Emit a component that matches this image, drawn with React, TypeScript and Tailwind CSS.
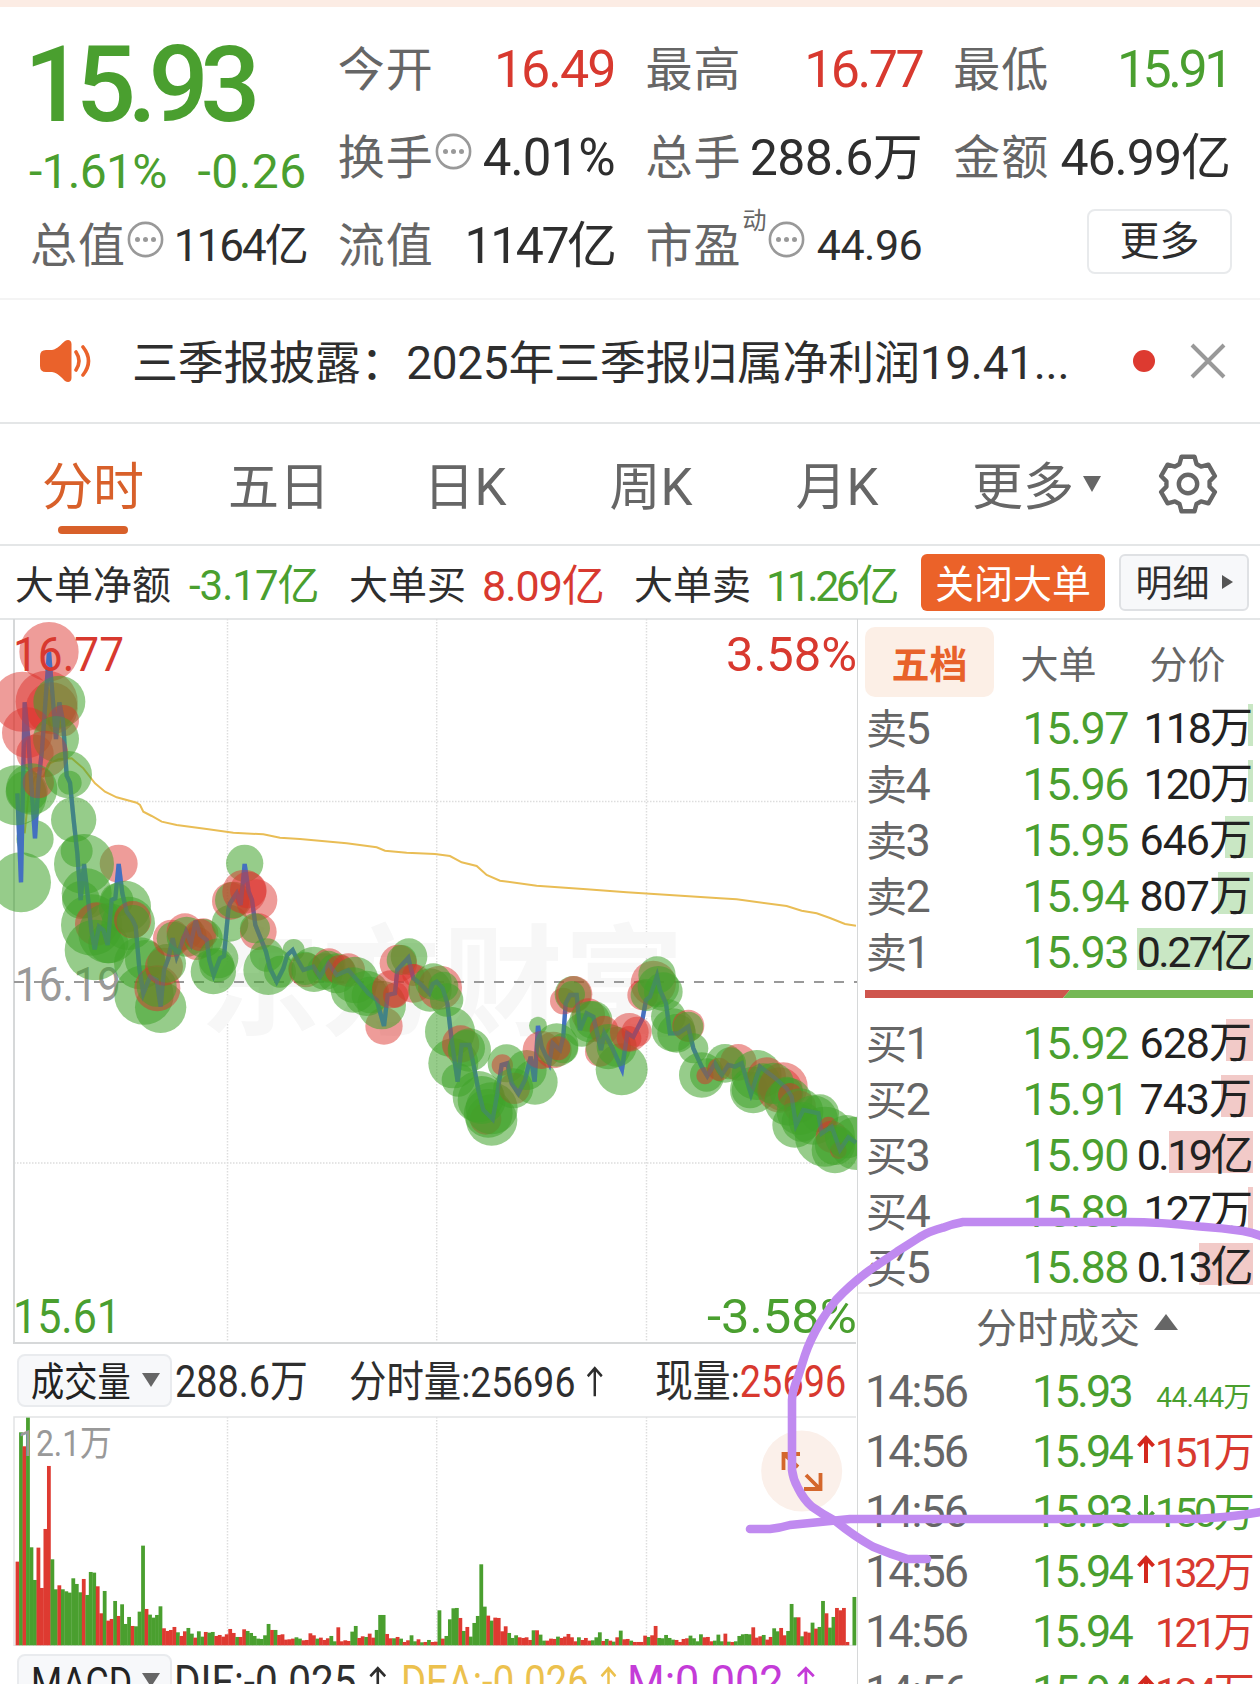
import type { ReactNode } from "react";

const GREEN = "#4a9f2f";
const RED = "#d8392f";

const Dots = () => (
  <svg width="37" height="37" viewBox="0 0 37 37" className="shrink-0">
    <circle cx="18.5" cy="18.5" r="16.6" fill="none" stroke="#999" strokeWidth="2.6" />
    <circle cx="10.5" cy="18.5" r="2.5" fill="#999" />
    <circle cx="18.5" cy="18.5" r="2.5" fill="#999" />
    <circle cx="26.5" cy="18.5" r="2.5" fill="#999" />
  </svg>
);

type StatProps = {
  label: string;
  value: string;
  valueClass: string;
  dots?: boolean;
  sup?: string;
};

const Stat = ({ label, value, valueClass, dots, sup }: StatProps) => (
  <div className="flex items-center whitespace-nowrap h-[88px]">
    <span className="text-[47px] tracking-[1px] text-[#666]">{label}</span>
    {sup && <span className="text-[24px] text-[#666] self-start mt-[5px] ml-[1px]">{sup}</span>}
    {dots && (
      <span className="ml-[1px] -mt-[13px]">
        <Dots />
      </span>
    )}
    <span className={"ml-auto " + valueClass}>{value}</span>
  </div>
);

const Header = () => (
  <div className="grid grid-cols-4 grid-rows-[88px_88px_88px] gap-x-[31px] px-[30px] pt-[19px] h-[293px] border-b-2 border-[#f4f4f4]">
    <div className="row-span-2 whitespace-nowrap text-[#4a9f2f]">
      <div className="-ml-[6px] -mt-[1px] text-[106px] font-medium leading-[120px] tracking-[-8.500px]">15.93</div>
      <div className="flex justify-between text-[48px] leading-[54px]">
        <span className="-ml-[1px] tracking-[-.7px]">-1.61%</span>
        <span className="tracking-[.5px]">-0.26</span>
      </div>
    </div>
    <Stat label="今开" value="16.49" valueClass="text-[52px] tracking-[-2px] text-[#d8392f]" />
    <Stat label="最高" value="16.77" valueClass="text-[52px] tracking-[-2.500px] text-[#d8392f]" />
    <Stat label="最低" value="15.91" valueClass="text-[52px] tracking-[-3.500px] text-[#4a9f2f]" />
    <Stat label="换手" value="4.01%" valueClass="text-[51px] tracking-[-1px] text-[#2e2e2e]" dots />
    <Stat label="总手" value="288.6万" valueClass="text-[50px] tracking-[-.5px] text-[#2e2e2e]" />
    <Stat label="金额" value="46.99亿" valueClass="text-[50px] tracking-[-1px] text-[#2e2e2e]" />
    <Stat label="总值" value="1164亿" valueClass="text-[44px] tracking-[-2px] text-[#2e2e2e]" dots />
    <Stat label="流值" value="1147亿" valueClass="text-[50px] tracking-[-2.500px] text-[#2e2e2e]" />
    <Stat label="市盈" value="44.96" valueClass="text-[43px] tracking-[-.5px] text-[#2e2e2e]" sup="动" dots />
    <div className="flex items-center justify-end h-[88px]">
      <div className="flex items-center justify-center w-[145px] h-[65px] -mr-[2px] -mt-[9px] border-2 border-[#e8eaec] rounded-lg text-[40px] text-[#2e2e2e]">
        更多
      </div>
    </div>
  </div>
);

const News = () => (
  <div className="flex items-center h-[124px] border-b-2 border-[#e4e6e7] pl-[40px]">
    <svg width="52" height="44" viewBox="0 0 52 44" className="shrink-0">
      <path
        d="M6 11H12C18 10 21 5 25 2C28 0 31.500 1 31.500 5V39C31.500 43 28 44 25 42C21 38 18 34 12 33H6Q0 33 0 27V17Q0 11 6 11Z"
        fill="#ea622b"
      />
      <path d="M36 13Q42 22 36 31M43 8Q54 22 43 36" fill="none" stroke="#ea622b" strokeWidth="3.600" strokeLinecap="round" />
    </svg>
    <div className="ml-[40px] pt-[6px] w-[940px] whitespace-nowrap text-[46px] tracking-[-.3px] text-[#2e2e2e]">
      三季报披露：2025年三季报归属净利润19.41...
    </div>
    <div className="ml-[61px] size-[22px] rounded-full bg-[#dd3a30]" />
    <svg width="36" height="36" viewBox="0 0 36 36" className="ml-[35px]">
      <path d="M2 2L34 34M34 2L2 34" stroke="#999" strokeWidth="4" />
    </svg>
  </div>
);

const gearPoints = [0, 60, 120, 180, 240, 300]
  .flatMap((deg) => {
    const a = (deg * Math.PI) / 180;
    return [
      [-8.5, -20],
      [-6.5, -27.3],
      [6.5, -27.3],
      [8.5, -20],
    ].map(([x, y]) => `${x * Math.cos(a) - y * Math.sin(a)},${x * Math.sin(a) + y * Math.cos(a)}`);
  })
  .join(" ");

const Tabs = () => (
  <div className="flex items-center h-[122px] border-b-2 border-[#e4e6e7] text-[51px] text-[#666]">
    <div className="relative pt-[7px] w-[186px] text-center text-[#d8602a]">
      分时
      <div className="absolute left-[58px] -bottom-[16px] w-[70px] h-[8px] rounded-full bg-[#d8602a]" />
    </div>
    <div className="pt-[7px] w-[186px] text-center">五日</div>
    <div className="pt-[7px] w-[186px] text-center">日K</div>
    <div className="pt-[7px] w-[186px] text-center">周K</div>
    <div className="pt-[7px] w-[186px] text-center">月K</div>
    <div className="flex items-center ml-[42px] w-[185px]">
      <span className="pt-[7px]">更多</span>
      <svg width="18" height="16" viewBox="0 0 18 16" className="ml-[9px]">
        <path d="M0 0H18L9 16Z" fill="#666" />
      </svg>
    </div>
    <svg width="62" height="62" viewBox="-31 -31 62 62">
      <polygon points={gearPoints} fill="none" stroke="#666" strokeWidth="4.400" strokeLinejoin="round" />
      <circle r="9.200" fill="none" stroke="#666" strokeWidth="4.400" />
    </svg>
  </div>
);

const BigOrders = () => (
  <div className="flex items-center h-[74px] border-b-2 border-[#e4e6e7] whitespace-nowrap text-[39px] text-[#2e2e2e]">
    <div className="flex shrink-0 items-center pt-[9px] pl-[15px] w-[921px]">
      <div className="w-[174px]">大单净额</div>
      <div className="w-[160px] text-[42px] tracking-[-1px] text-[#4a9f2f]">-3.17亿</div>
      <div className="w-[133px]">大单买</div>
      <div className="w-[152px] text-[43px] tracking-[-1px] text-[#d8392f]">8.09亿</div>
      <div className="w-[132px]">大单卖</div>
      <div className="text-[43px] tracking-[-3.500px] text-[#4a9f2f]">11.26亿</div>
    </div>
    <div className="flex items-center justify-center pt-[6px] w-[184px] h-[57px] rounded-md bg-[#eb6229] text-white">关闭大单</div>
    <div className="flex items-center justify-center ml-[14px] w-[130px] h-[57px] rounded-md border-2 border-[#dfe1e4] bg-[#f7f8fa] text-[37px]">
      <span className="pt-[7px]">明细</span>
      <svg width="11" height="14" viewBox="0 0 11 14" className="ml-[12px]">
        <path d="M0 0L11 7L0 14Z" fill="#555" />
      </svg>
    </div>
  </div>
);

// bubbles: colour, x, y, radius in third-pixel units from the chart's top left
const peaks = `r147,125,89 g63,817,90 g734,760,56 r356,761,57 g482,1192,77 g1227,1040,55 r1152,1248,56
g105,687,56 g1475,1530,77 g1605,1416,68 g1614,1247,27 g1865,1378,78`;

const bubbles = `r67,275,90 r140,275,93 r155,295,78 g178,275,78 r82,368,76 r105,430,56 r190,332,47 g168,387,69
r135,432,70 g50,556,90 g95,537,77 g80,545,63 r115,518,47 g205,494,71 g209,518,36 g221,629,68 g252,762,90
g230,723,48 g260,850,75 g243,870,57 g275,945,92 r290,942,65 g285,1020,91 g325,970,90 g325,1000,60
g350,870,50 g375,890,78 g385,940,80 r398,929,56 g400,935,50 g420,1060,78 g435,1050,60 g432,1155,89
r472,1135,69 g470,1130,60 r492,1070,57 g500,1060,58 r515,985,56 g520,985,50 r555,965,55 g560,980,60
r590,1000,50 r610,970,45 g610,985,58 r600,975,48 g640,1085,68 g655,1045,60 g650,1065,52 g690,940,55
r692,873,56 g700,870,55 r733,845,66 r770,870,62 r745,840,55 r775,965,55 g765,955,45 g805,1080,75
g800,1035,50 g840,1085,48 g881,1020,33 r918,1080,52 g915,1075,50 g942,1078,68 g975,1085,55 r987,1065,50
g985,1070,48 g1010,1090,60 r1045,1080,50 r1020,1080,45 g1065,1110,70 g1060,1140,68 g1100,1150,68
g1110,1155,55 g1145,1185,73 r1173,1138,57 r1187,1155,38 r1195,1060,56 g1205,1050,45 r1240,1120,58
r1240,1095,33 g1290,1140,65 r1320,1133,66 g1300,1115,55 g1330,1130,45 g1340,1170,50 g1350,1265,75
g1360,1360,75 r1382,1302,56 g1408,1320,65 g1400,1315,55 g1375,1410,50 r1457,1527,47 g1435,1460,77
g1445,1470,72 g1465,1510,73 g1475,1495,78 g1520,1360,57 r1507,1365,32 r1543,1435,47 g1540,1435,60
g1580,1380,60 r1625,1320,57 r1660,1320,55 g1670,1305,65 g1690,1315,45 r1675,1315,36 r1690,1173,40
g1719,1153,55 r1722,1153,55 g1715,1153,40 r1765,1215,50 g1770,1235,62 g1780,1230,57 g1745,1260,50
r1812,1260,43 r1800,1325,45 g1825,1310,68 g1850,1310,60 r1888,1267,58 r1910,1265,45 r1887,1285,37
r1960,1120,68 r1928,1155,46 g1940,1155,48 g1971,1095,56 g1990,1145,58 g1975,1130,62 g2005,1220,52
g2020,1260,65 g2030,1270,58 r2065,1247,48 g2065,1250,45 g2080,1315,45 g2105,1395,68 g2120,1395,50
r2115,1397,26 g2175,1360,58 r2157,1378,35 r2215,1357,55 g2190,1360,48 g2270,1395,75 g2260,1440,70
g2250,1440,55 r2300,1400,58 g2290,1410,50 r2350,1430,73 r2340,1440,68 g2320,1420,62 g2365,1475,72
g2360,1450,50 r2370,1455,36 r2400,1490,48 g2385,1545,68 g2405,1535,60 g2400,1505,70 g2440,1530,74
g2460,1510,57 g2475,1580,90 r2485,1545,25 r2495,1580,48 g2505,1620,70 g2505,1605,60 r2515,1622,25
g2540,1580,65 g2570,1600,80`;

const priceLine = `52,550 63,817 74,277 84,375 105,685 116,510 126,420 147,125 168,387 178,277 189,333 200,497
210,518 221,630 232,730 242,870 252,762 263,855 274,960 284,1018 297,950 310,960 323,1005 335,870 346,865
356,762 367,850 380,905 398,930 407,950 418,1075 430,1150 450,1100 470,1110 482,1190 492,1080 505,1045
518,985 530,1040 545,1000 558,965 573,1000 587,932 600,975 620,990 628,1050 641,1095 660,1045 672,1038
685,900 690,880 710,850 722,885 734,762 746,845 756,870 766,945 798,1025 810,1075 830,1115 850,1075
862,1035 878,1020 890,1045 910,1080 940,1070 960,1100 985,1060 1010,1095 1045,1080 1080,1120 1105,1150
1130,1170 1152,1248 1163,1155 1185,1150 1192,1080 1225,1043 1240,1105 1260,1120 1288,1150 1298,1122
1310,1115 1328,1135 1342,1180 1355,1290 1365,1360 1373,1415 1385,1305 1408,1305 1420,1360 1435,1440
1450,1500 1478,1528 1492,1450 1505,1365 1522,1360 1535,1420 1555,1450 1575,1410 1592,1340 1604,1415
1614,1248 1625,1310 1648,1360 1658,1300 1680,1320 1690,1280 1697,1180 1710,1155 1730,1155 1740,1260
1760,1210 1780,1220 1803,1320 1813,1270 1835,1310 1866,1378 1882,1270 1900,1280 1928,1225 1938,1170
1950,1160 1971,1098 1980,1140 1998,1180 2010,1270 2035,1270 2065,1250 2080,1315 2105,1370 2122,1398
2145,1360 2165,1395 2185,1365 2205,1370 2225,1360 2253,1452 2280,1370 2320,1400 2360,1435 2375,1460
2388,1545 2410,1500 2455,1510 2465,1570 2495,1550 2520,1620 2545,1582 2568,1598`;

const avgLine = `74,670 85,560 105,500 130,500 150,460 175,448 215,445 250,475 285,520 315,545 350,562 410,578
420,585 430,605 455,618 485,635 530,645 620,657 700,668 790,673 840,683 900,687 1040,700 1130,712
1155,722 1220,728 1305,732 1350,738 1385,757 1430,768 1460,795 1500,812 1610,827 1760,838 1880,847
2020,856 2160,865 2210,868 2360,888 2405,902 2450,910 2490,924 2535,942 2568,947`;

const Bubbles = ({ data }: { data: string }) => (
  <>
    {data.split(/\s+/).map((item, i) => {
      const [x, y, r] = item.slice(1).split(",");
      return (
        <circle key={i} cx={x} cy={y} r={r} fill={item[0] === "r" ? "#dc302a" : "#3fa32a"} fillOpacity={item[0] === "r" ? 0.48 : 0.55} />
      );
    })}
  </>
);

const PriceChart = () => (
  <svg width="857" height="725" viewBox="0 619 857 725" className="block">
    <g stroke="#ddd" strokeWidth="1.500" strokeDasharray="1.500 1.500">
      <path d="M227.500 619V1343M436.700 619V1343M646.500 619V1343M14 801.500H857M14 1163H857" />
    </g>
    <path d="M14 619V1343H856" fill="none" stroke="#d6d8d9" strokeWidth="2" />
    <text x="200" y="1026" textLength="484" fontSize="120" fontWeight="700" fill="#f7f7f7">东方财富</text>
    <path d="M14 982H857" stroke="#999" strokeWidth="2" strokeDasharray="10 10" />
    <text x="15" y="1001" textLength="106" lengthAdjust="spacingAndGlyphs" fontSize="48" fill="#999">16.19</text>
    <g transform="translate(0 610) scale(.33333)">
      <polyline points={avgLine} fill="none" stroke="#e9bd55" strokeWidth="6" />
      <Bubbles data={peaks} />
      <polyline points={priceLine} fill="none" stroke="#4470c0" strokeWidth="13" />
      <Bubbles data={bubbles} />
      <polyline points={priceLine} fill="none" stroke="#4470c0" strokeOpacity=".3" strokeWidth="13" />
    </g>
    <text x="13" y="671" textLength="111" lengthAdjust="spacingAndGlyphs" fontSize="48" fill={RED}>16.77</text>
    <text x="726" y="671" textLength="131" lengthAdjust="spacingAndGlyphs" fontSize="48" fill={RED}>3.58%</text>
    <text x="13" y="1333" textLength="108" lengthAdjust="spacingAndGlyphs" fontSize="48" fill={GREEN}>15.61</text>
    <text x="707" y="1333" textLength="150" lengthAdjust="spacingAndGlyphs" fontSize="48" fill={GREEN}>-3.58%</text>
  </svg>
);

// one bar per minute: colour and height
const volume = `r251 g639 r597 g683 g294 g196 r293 r172 r349 r538 g258 g168 r180 g168 g162 g158 g201 g184 g159 r199
g151 g220 g218 r177 r96 g163 r74 r79 g133 r88 g123 g64 g85 r58 g57 g101 g299 r109 g92 g83 g91 g117 r51 r43
r46 r55 g39 r28 r42 g52 g35 r23 g42 g26 r40 g38 g40 r28 r31 r26 r33 r49 r37 g25 r25 r48 g43 g37 g28 g20 g19
g30 g64 r46 g46 r31 r33 r17 r18 r20 g24 g20 r15 r16 r36 r30 g20 r23 r16 r21 g28 g12 r54 r12 r15 r13 g41 g58
r22 r27 g25 r35 r23 g46 g91 g91 r34 r21 g21 r25 g20 r10 r15 g30 g12 r18 g9 r10 g16 r10 r11 g105 r20 g28 g78
g111 g112 r82 g43 r55 g26 g67 g88 g243 g116 r89 g74 r83 r82 r42 r57 g37 g22 g30 r24 r22 r24 r16 g45 r45 g32
g14 r14 r20 r19 g26 r22 r26 r34 r24 r12 g24 r16 r22 r14 g15 g24 g39 r13 g19 r14 g11 r24 g44 r18 r19 g14 r10
r10 r10 r29 g25 r30 r58 g22 g21 g31 g22 g17 r16 r10 r19 r21 g29 g21 g12 g33 r24 r25 r12 g14 g32 g12 r35 g11
r10 g12 g28 g33 g34 g33 r54 r23 r27 g31 r17 r25 g51 g42 r52 r30 g43 g124 g84 r84 g27 r41 r38 g68 r50 g55
g133 r96 g53 g85 r112 r105 r112 r10 g0 g145`;

const VolumeChart = () => (
  <svg width="857" height="230" viewBox="0 1416 857 230" className="block">
    <path d="M227.500 1417V1645M436.700 1417V1645M646.500 1417V1645" stroke="#ddd" strokeWidth="1.500" strokeDasharray="1.500 1.500" />
    <path d="M856 1417H14V1645.500H856" fill="none" stroke="#e2e4e5" strokeWidth="1.500" />
    {volume.split(/\s+/).map((bar, i) => {
      const h = Number(bar.slice(1)) / 3;
      return (
        <rect key={i} x={15.6 + i * 3.487} y={1645.3 - h} width="3.800" height={h} fill={bar[0] === "r" ? "#de3a31" : GREEN} />
      );
    })}
    <text x="18" y="1456" textLength="94" lengthAdjust="spacingAndGlyphs" fontSize="36" fill="#999">12.1万</text>
    <circle cx="801.700" cy="1471" r="40.500" fill="#fbf0ea" />
    <path
      d="M783.500 1470V1454H800M784 1454L798 1467M820.500 1473V1489H804M820 1489L806 1475"
      fill="none"
      stroke="#d4672c"
      strokeWidth="3.800"
    />
  </svg>
);

const Pick = ({ children }: { children: ReactNode }) => (
  <div className="flex items-center shrink-0 ml-[17px] w-[155px] h-[53px] pl-[12px] rounded-lg border-2 border-[#e9ebee] bg-[#f7f8fa]">
    <span className="shrink-0 w-[111px] pt-[5px] whitespace-nowrap">
      <span className="inline-block origin-left scale-x-[.83] text-[40px] text-[#222]">{children}</span>
    </span>
    <svg width="18" height="14" viewBox="0 0 18 14" className="shrink-0">
      <path d="M0 0H18L9 14Z" fill="#666" />
    </svg>
  </div>
);

type NarrowProps = { className: string; scale?: string; children: ReactNode };

const Narrow = ({ className, scale = "scale-x-[.87]", children }: NarrowProps) => (
  <div className={"shrink-0 pt-1 whitespace-nowrap text-[44px] " + className}>
    <span className={"inline-block origin-left " + scale}>{children}</span>
  </div>
);

const UpArrow = () => (
  <svg width="19" height="32" viewBox="0 0 20 32" className="inline-block ml-[13px] align-baseline">
    <path d="M10 32V3M1.500 11L10 2.500L18.500 11" fill="none" stroke="currentColor" strokeWidth="3" />
  </svg>
);

const LeftPane = () => (
  <div className="w-[857px]">
    <PriceChart />
    <div className="flex items-center h-[72px] text-[#2e2e2e]">
      <Pick>成交量</Pick>
      <Narrow className="ml-[3px] w-[174px]" scale="scale-x-[.86]">288.6万</Narrow>
      <Narrow className="w-[306px]">
        <span className="text-[43px]">分时量:25696</span>
        <UpArrow />
      </Narrow>
      <Narrow className="w-[180px]" scale="scale-x-[.86]">
        现量:<span className="text-[#d8392f]">25696</span>
      </Narrow>
    </div>
    <VolumeChart />
    <div className="flex items-center h-[68px] text-[#2e2e2e]">
      <Pick>
        <span className="text-[43px]">MACD</span>
      </Pick>
      <Narrow className="ml-[2px] w-[227px]" scale="scale-x-[.92]">
        DIF:-0.025
        <UpArrow />
      </Narrow>
      <Narrow className="w-[226px] text-[#ecc14e]" scale="scale-x-[.87]">
        DEA:-0.026
        <UpArrow />
      </Narrow>
      <Narrow className="w-[200px] text-[#c43bd8]" scale="scale-x-[.98]">
        M:0.002
        <UpArrow />
      </Narrow>
    </div>
  </div>
);

const sells = [
  { name: "卖5", price: "15.97", vol: "118万", bar: 5 },
  { name: "卖4", price: "15.96", vol: "120万", bar: 5 },
  { name: "卖3", price: "15.95", vol: "646万", bar: 28 },
  { name: "卖2", price: "15.94", vol: "807万", bar: 35 },
  { name: "卖1", price: "15.93", vol: "0.27亿", bar: 116 },
];

const buys = [
  { name: "买1", price: "15.92", vol: "628万", bar: 27 },
  { name: "买2", price: "15.91", vol: "743万", bar: 32 },
  { name: "买3", price: "15.90", vol: "0.19亿", bar: 84 },
  { name: "买4", price: "15.89", vol: "127万", bar: 5 },
  { name: "买5", price: "15.88", vol: "0.13亿", bar: 54 },
];

type Level = (typeof sells)[number];

const volTracking = (vol: string) => {
  if (vol[1] === ".") return "tracking-[-2.500px]";
  return vol[0] === "1" ? "tracking-[-2px]" : "tracking-[-1px]";
};

const LevelRow = ({ level, barClass }: { level: Level; barClass: string }) => (
  <div className="relative flex items-center h-[56px] pt-[3px] pl-[1px] whitespace-nowrap text-[45px] tracking-[-1.500px]">
    <div className={"absolute right-0 top-[5px] h-[42px] " + barClass} style={{ width: level.bar }} />
    <span className="relative w-[100px] text-[#666]">
      <span className="text-[41px]">{level.name[0]}</span>
      {level.name[1]}
    </span>
    <span className="relative w-[162px] text-right text-[#4a9f2f]">{level.price}</span>
    <span className={"relative ml-auto mr-[2px] text-[43px] text-[#222] " + volTracking(level.vol)}>{level.vol}</span>
  </div>
);

const trades = [
  { price: "15.93", vol: "44.44万", up: false, arrow: "" },
  { price: "15.94", vol: "151万", up: true, arrow: "up" },
  { price: "15.93", vol: "150万", up: false, arrow: "down" },
  { price: "15.94", vol: "132万", up: true, arrow: "up" },
  { price: "15.94", vol: "121万", up: true, arrow: "" },
  { price: "15.94", vol: "124万", up: true, arrow: "up" },
];

const Trades = () => (
  <div>
    {trades.map((t, i) => (
      <div key={i} className="flex items-baseline h-[60px] leading-[60px] whitespace-nowrap text-[45px] tracking-[-2px]">
        <span className="shrink-0 w-[110px] text-[#666]">14:56</span>
        <span className="shrink-0 w-[156px] text-right tracking-[-2.800px] text-[#4a9f2f]">{t.price}</span>
        <span className="shrink-0 w-[24px] pl-[6px]">
          {t.arrow && (
            <svg width="18" height="28" viewBox="0 0 18 28" className={t.arrow === "down" ? "rotate-180 mb-1" : "mb-1"}>
              <path d="M9 28V3M1.500 11L9 3L16.500 11" fill="none" stroke={t.up ? "#d3281e" : GREEN} strokeWidth="4" />
            </svg>
          )}
        </span>
        <span
          className={
            "ml-auto " +
            (t.up ? "text-[#d8392f] " : "text-[#4a9f2f] ") +
            (t.vol.length > 5 ? "mr-[2px] text-[28px] tracking-[-.6px]" : "mr-[5px] text-[41px] tracking-[-3.500px]")
          }
        >
          {t.vol}
        </span>
      </div>
    ))}
  </div>
);

const RightPane = () => (
  <div className="w-[403px] h-[1065px] border-l border-[#d6d8d9]">
    <div className="px-[7px]">
      <div className="flex mt-[8px] h-[70px] text-center leading-[77px] text-[38px] text-[#666]">
        <div className="w-[129px] rounded-[10px] bg-[#fcefe6] font-bold text-[#e8622a]">五档</div>
        <div className="w-[129px]">大单</div>
        <div className="w-[129px]">分价</div>
      </div>
      <div className="mt-[2px]">
        {sells.map((l) => (
          <LevelRow key={l.name} level={l} barClass="bg-[#c9e7c4]" />
        ))}
      </div>
      <svg width="388" height="8" viewBox="0 0 388 8" className="mt-[11px] block">
        <path d="M0 0H205L198 8H0Z" fill="#cf554d" />
        <path d="M205 0H388V8H198Z" fill="#75b855" />
      </svg>
      <div className="mt-[16px]">
        {buys.map((l) => (
          <LevelRow key={l.name} level={l} barClass="bg-[#f2cac8]" />
        ))}
      </div>
    </div>
    <div className="border-t-2 border-[#efefef] -mt-[2px]">
      <div className="flex items-center justify-center h-[68px] pl-[36px] text-[41px] text-[#666]">
        <span className="pt-[4px]">分时成交</span>
        <svg width="24" height="16" viewBox="0 0 24 16" className="ml-[14px] -mt-3">
          <path d="M0 16H24L12 0Z" fill="#666" />
        </svg>
      </div>
      <div className="px-[7px]">
        <Trades />
      </div>
    </div>
  </div>
);

// freehand marker over the latest trades
const Marker = () => (
  <svg width="1260" height="1684" viewBox="0 0 1260 1684" className="absolute inset-0 pointer-events-none">
    <g fill="none" stroke="#c08af0" strokeWidth="8.600" strokeLinecap="round" strokeLinejoin="round">
      <path d="M1266 1238Q1255 1233 1243 1231Q1222 1228 1200 1226.500Q1160 1222 1127 1222H963Q952 1224 943 1227.700Q930 1231 920 1237L897 1251.700L870 1270Q852 1283 836 1300Q826 1313 820 1323Q810 1340 805 1355L798 1377Q792 1392 792 1400V1470Q793 1479 798 1488Q804 1500 812 1506.700Q822 1514 835 1520.700Q855 1537 873 1546.700Q890 1554 907 1559H927" />
      <path d="M750 1529H770Q780 1528 790 1525Q820 1522 850 1519H1190Q1215 1518 1233 1516Q1250 1514 1266 1511" />
    </g>
  </svg>
);

export default function App() {
  return (
    <div className="relative w-[1260px] h-[1684px] overflow-hidden bg-white font-[Roboto,'Noto_Sans_CJK_SC',sans-serif] leading-[1.2]">
      <div className="h-[7px] bg-[#fcece4]" />
      <Header />
      <News />
      <Tabs />
      <BigOrders />
      <div className="flex -mt-[1px]">
        <LeftPane />
        <RightPane />
      </div>
      <Marker />
    </div>
  );
}
